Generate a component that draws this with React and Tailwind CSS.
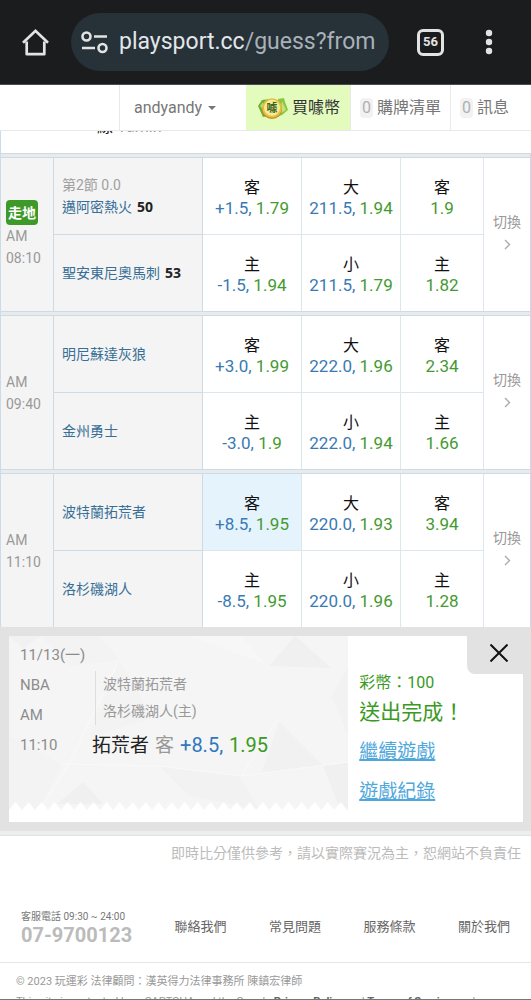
import { useState } from "react";

const games = [
  {
    id: 1,
    live: true,
    time: "08:10",
    away: { name: "邁阿密熱火", score: 50, status: "第2節 0.0" },
    home: { name: "聖安東尼奧馬刺", score: 53 },
    odds: [
      [
        { label: "客", line: "+1.5", odd: "1.79" },
        { label: "大", line: "211.5", odd: "1.94" },
        { label: "客", odd: "1.9" },
      ],
      [
        { label: "主", line: "-1.5", odd: "1.94" },
        { label: "小", line: "211.5", odd: "1.79" },
        { label: "主", odd: "1.82" },
      ],
    ],
  },
  {
    id: 2,
    time: "09:40",
    away: { name: "明尼蘇達灰狼" },
    home: { name: "金州勇士" },
    odds: [
      [
        { label: "客", line: "+3.0", odd: "1.99" },
        { label: "大", line: "222.0", odd: "1.96" },
        { label: "客", odd: "2.34" },
      ],
      [
        { label: "主", line: "-3.0", odd: "1.9" },
        { label: "小", line: "222.0", odd: "1.94" },
        { label: "主", odd: "1.66" },
      ],
    ],
  },
  {
    id: 3,
    time: "11:10",
    away: { name: "波特蘭拓荒者" },
    home: { name: "洛杉磯湖人" },
    odds: [
      [
        { label: "客", line: "+8.5", odd: "1.95" },
        { label: "大", line: "220.0", odd: "1.93" },
        { label: "客", odd: "3.94" },
      ],
      [
        { label: "主", line: "-8.5", odd: "1.95" },
        { label: "小", line: "220.0", odd: "1.96" },
        { label: "主", odd: "1.28" },
      ],
    ],
  },
];

const footerLinks = ["聯絡我們", "常見問題", "服務條款", "關於我們"];

function BrowserBar() {
  return (
    <header className="flex h-[85px] shrink-0 items-center border-b border-[#4a4d50] bg-[#1b1c1e] pl-[21px] pr-[35px]">
      <button type="button" aria-label="Home" className="mr-[21px]">
        <svg width="29" height="29" viewBox="0 0 29 29" fill="none" stroke="#e3e3e3" strokeWidth="2.7">
          <path d="M5.700 13.500V26.200h17.600V13.500" strokeLinejoin="round" />
          <path d="M2 14.800L14.500 2.800l12.500 12" />
        </svg>
      </button>
      <div className="flex h-[58px] min-w-0 flex-1 items-center overflow-hidden rounded-full bg-[#263138] pl-2.5 pr-[11px]">
        <svg className="mr-[11px] shrink-0" width="27" height="23" viewBox="0 0 27 23" fill="none" stroke="#e3e3e3" strokeWidth="2.6">
          <circle cx="5.5" cy="5.5" r="4" />
          <path d="M13 5.5h13M1 17h13" />
          <circle cx="21.5" cy="17" r="4" />
        </svg>
        <p className="flex-1 overflow-hidden whitespace-nowrap text-[23px] leading-8 text-[#a9b1b8]">
          <span className="text-[#e3e6e8]">playsport.cc</span>/guess?from
        </p>
      </div>
      <button
        type="button"
        className="ml-7 flex h-[27px] w-[27px] items-center justify-center rounded-[6px] border-3 border-[#e3e3e3] text-[13px] font-bold text-[#e3e3e3]"
      >
        56
      </button>
      <button type="button" aria-label="Menu" className="ml-[38px]">
        <svg width="14" height="26" viewBox="0 0 14 26" fill="#e3e3e3">
          <circle cx="7" cy="4" r="3.2" />
          <circle cx="7" cy="13" r="3.2" />
          <circle cx="7" cy="22" r="3.2" />
        </svg>
      </button>
    </header>
  );
}

function CoinIcon() {
  return (
    <svg className="mr-1" width="30" height="24" viewBox="0 0 30 24">
      <path d="M0 10l4-6 8-1-2 17-5 1z" fill="#6fae35" />
      <path d="M2 10l3-4 2 10z" fill="#b5dc6e" />
      <path d="M20 3l6-1 1 4 3 8-6 5-6 2z" fill="#8cc63f" />
      <path d="M24 5l4 9-5 3z" fill="#c3e27a" />
      <ellipse cx="14" cy="14" rx="10" ry="9" fill="#c08f1f" />
      <circle cx="14" cy="12" r="9.8" fill="#e8bd3c" />
      <circle cx="14" cy="11.8" r="8" fill="#f5ec9a" />
      <text x="14" y="16" fontSize="11" fontWeight="700" textAnchor="middle" fill="#3f6420">
        噱
      </text>
    </svg>
  );
}

function CountBadge({ value }) {
  return <span className="mr-1 rounded-sm bg-[#f2f2f2] px-0.5 text-base leading-5 text-[#b0b0b0]">{value}</span>;
}

function SiteNav() {
  return (
    <nav className="flex h-[46px] shrink-0 justify-end border-b border-[#e9e9e9] bg-white text-base text-[#777]">
      <button type="button" className="flex w-[127px] items-center border-l border-[#e9e9e9] pl-3.5">
        andyandy
        <span className="ml-1.5 border-x-4 border-t-4 border-x-transparent border-t-[#777]"></span>
      </button>
      <a href="#coin" className="flex w-[104px] items-center bg-[#e3fbbd] pl-3 text-[#333]">
        <CoinIcon />
        買噱幣
      </a>
      <a href="#list" className="flex w-[100px] items-center border-l border-[#e9e9e9] pl-[9px]">
        <CountBadge value="0" />
        購牌清單
      </a>
      <a href="#message" className="flex w-[81px] items-center border-l border-[#e9e9e9] pl-[9px]">
        <CountBadge value="0" />
        訊息
      </a>
    </nav>
  );
}

function TeamCell({ team, last }) {
  return (
    <td className={`border-r border-[#ccdbe6] bg-[#f4f4f4] pl-2 text-sm leading-[22px] ${last ? "" : "border-b"}`}>
      {team.status && <div className="text-[#a0a0a0]">{team.status}</div>}
      <a href="#team" className="text-[#376f96]">
        {team.name}
      </a>
      {team.score && <b className="ml-[5px] font-['Noto_Sans'] leading-5 text-[#222]">{team.score}</b>}
    </td>
  );
}

function OddCell({ bet, last, selected, onSelect }) {
  return (
    <td
      className={`border-r border-[#dce6ec] p-0 pt-1 ${last ? "h-[76px]" : "h-[77px] border-b"} ${
        selected ? "bg-[#e5f3fd]" : "bg-white"
      }`}
    >
      <button type="button" onClick={onSelect} className="block w-full whitespace-nowrap text-center">
        <span className="block text-base leading-[21px] text-[#111]">{bet.label}</span>
        <span className="block text-[17px] leading-[21px] text-[#449a30]">
          {bet.line && <span className="text-[#3a7ab3]">{bet.line}, </span>}
          {bet.odd}
        </span>
      </button>
    </td>
  );
}

function GameRows({ game, selected, setSelected }) {
  const rows = [game.away, game.home];

  return (
    <tbody>
      <tr>
        <td colSpan="6" className="h-[5px] border-y border-[#ccdbe6] bg-[#e8ebec] p-0"></td>
      </tr>
      {rows.map((team, r) => (
        <tr key={r}>
          {r === 0 && (
            <td rowSpan="2" className="border-r border-[#ccdbe6] bg-[#f4f4f4] pl-[5px] text-sm leading-[22px] text-[#999]">
              {game.live && (
                <span className="flex h-[25px] w-8 items-center justify-center rounded bg-[#3e9a28] font-bold text-white">
                  走地
                </span>
              )}
              <div>AM</div>
              <div>{game.time}</div>
            </td>
          )}
          <TeamCell team={team} last={r === 1} />
          {game.odds[r].map((bet, c) => {
            const key = `${game.id}-${r}-${c}`;
            return (
              <OddCell
                key={key}
                bet={bet}
                last={r === 1}
                selected={selected === key}
                onSelect={() => setSelected(key)}
              />
            );
          })}
          {r === 0 && (
            <td rowSpan="2" className="bg-white p-0 pb-2 text-center text-sm leading-[22px] text-[#999]">
              <button type="button" className="w-full">
                切換
                <svg className="mx-auto mt-1.5" width="7" height="11" viewBox="0 0 7 11" fill="none" stroke="#aaa" strokeWidth="1.4">
                  <path d="M1 1l4.5 4.5L1 10" />
                </svg>
              </button>
            </td>
          )}
        </tr>
      ))}
    </tbody>
  );
}

function TicketBackground() {
  return (
    <svg className="absolute inset-0 h-full w-full" viewBox="0 0 339 174" preserveAspectRatio="none">
      <defs>
        <pattern id="teeth" width="13" height="8" y="166" patternUnits="userSpaceOnUse">
          <path d="M0 8L6.500 0L13 8z" fill="#fff" />
        </pattern>
      </defs>
      <rect width="339" height="174" fill="#f5f5f5" />
      <path d="M0 0h32L14 12z" fill="#f1f1f1" />
      <path d="M32 0h58l20 24L60 30z" fill="#f3f3f3" />
      <path d="M110 24l34 58-64 20z" fill="#f3f3f3" />
      <path d="M0 100l52 28-22 46H0z" fill="#f3f3f3" />
      <path d="M74 146l20 22H48z" fill="#f0f0f0" />
      <path d="M150 130l80 10 20 34-70-14z" fill="#f2f2f2" />
      <path d="M180 0h52l24 28z" fill="#f7f7f7" />
      <path d="M286 0l36 32-62-2z" fill="#f0f0f0" />
      <path d="M270 86l44 44-62 8z" fill="#f1f1f1" />
      <path d="M314 130l25-4v48h-8z" fill="#f0f0f0" />
      <path d="M322 60l17-30v70z" fill="#f2f2f2" />
      <path d="M52 128l98 2 82 10 107-14M232 140l36-56M110 24L60 128l-30 46" fill="none" stroke="#f9f9f9" />
      <rect y="166" width="339" height="8" fill="url(#teeth)" />
    </svg>
  );
}

function BetResult() {
  return (
    <section className="relative border-b-9 border-l-9 border-r-8 border-t-9 border-[#e2e2e2] bg-white">
      <div className="flex h-[186px]">
        <div className="relative h-[174px] w-[66%]">
          <TicketBackground />
          <div className="relative flex pl-[11px] pt-1 text-[15px] text-[#8c8c8c]">
            <div className="w-[72px] leading-[30px]">
              <div className="whitespace-nowrap">11/13(一)</div>
              <div>NBA</div>
              <div>AM</div>
              <div>11:10</div>
            </div>
            <div className="pt-[31px]">
              <div className="ml-[3px] border-l border-[#ddd] pl-[7px] text-sm leading-[27px] text-[#999]">
                <div>波特蘭拓荒者</div>
                <div>洛杉磯湖人(主)</div>
              </div>
              <p className="flex items-baseline gap-1.5 whitespace-nowrap text-[19px] leading-10 text-[#999]">
                <span className="text-[#222]">拓荒者</span>
                <span>客</span>
                <span className="text-xl leading-10 text-[#2f77c0]">+8.5,</span>
                <span className="text-xl leading-10 text-[#3a9a24]">1.95</span>
              </p>
            </div>
          </div>
        </div>
        <div className="flex flex-col items-start pl-[11px] pt-[35px] text-[#3a9a24]">
          <div className="text-base leading-6">彩幣：100</div>
          <div className="mb-[3px] text-[21px] leading-[34px]">送出完成！</div>
          <a href="#continue" className="text-[19px] leading-10 text-[#4fa8dc] underline decoration-2">
            繼續遊戲
          </a>
          <a href="#record" className="text-[19px] leading-10 text-[#4fa8dc] underline decoration-2">
            遊戲紀錄
          </a>
        </div>
      </div>
      <button
        type="button"
        aria-label="Close"
        className="absolute right-0 top-0 flex h-[38px] w-14 items-center justify-center rounded-bl-lg bg-[#e2e2e2] pb-1 pl-2"
      >
        <svg width="18" height="18" viewBox="0 0 18 18" stroke="#111" strokeWidth="2">
          <path d="M0.500 0.500l17 17M17.500 0.500l-17 17" />
        </svg>
      </button>
    </section>
  );
}

function Footer() {
  return (
    <footer>
      <div className="flex items-center justify-between border-b border-[#e6e6e6] px-[21px] pb-[17px] pt-11">
        <div className="text-[10px] leading-4 text-[#777]">
          客服電話 09:30 ~ 24:00
          <div className="text-xl font-bold leading-5 text-[#bbb]">07-9700123</div>
        </div>
        {footerLinks.map((item) => (
          <a key={item} href="#footer" className="text-[13px] text-[#666]">
            {item}
          </a>
        ))}
      </div>
      <div className="whitespace-nowrap px-4 pt-[9px] text-[11px] leading-5 text-[#999]">
        <p>© 2023 玩運彩 法律顧問：漢英得力法律事務所 陳鎮宏律師</p>
        <p>
          This site is protected by reCAPTCHA and the Google <b className="text-[#666]">Privacy Policy</b> and{" "}
          <b className="text-[#666]">Terms of Service</b> apply.
        </p>
      </div>
    </footer>
  );
}

export default function App() {
  const [selected, setSelected] = useState("3-0-0");

  return (
    <div className="flex h-screen flex-col overflow-hidden border-b border-[#777] bg-white font-[Roboto,'Noto_Sans_CJK_TC',sans-serif]">
      <BrowserBar />
      <SiteNav />
      <main className="min-h-0 flex-1 overflow-hidden">
        <div className="flex h-[22px] items-start overflow-hidden border-l border-[#ccdbe6]">
          <p className="-mt-3.5 pl-24 text-base leading-5 text-[#999]">
            <span className="text-[#111]">線</span> Yamin
          </p>
        </div>
        <table className="w-full table-fixed border-separate border-spacing-0 border-x border-[#ccdbe6]">
          <colgroup>
            <col className="w-[53px]" />
            <col />
            <col className="w-[99px]" />
            <col className="w-[99px]" />
            <col className="w-[83px]" />
            <col className="w-[46px]" />
          </colgroup>
          {games.map((game) => (
            <GameRows key={game.id} game={game} selected={selected} setSelected={setSelected} />
          ))}
        </table>
        <BetResult />
        <div className="h-[5px] border-b border-[#dde3e6] bg-[#eceeee]"></div>
        <p className="pr-2.5 pt-[5px] text-right text-sm leading-6 text-[#bbb]">
          即時比分僅供參考，請以實際賽況為主，恕網站不負責任
        </p>
        <Footer />
      </main>
    </div>
  );
}
